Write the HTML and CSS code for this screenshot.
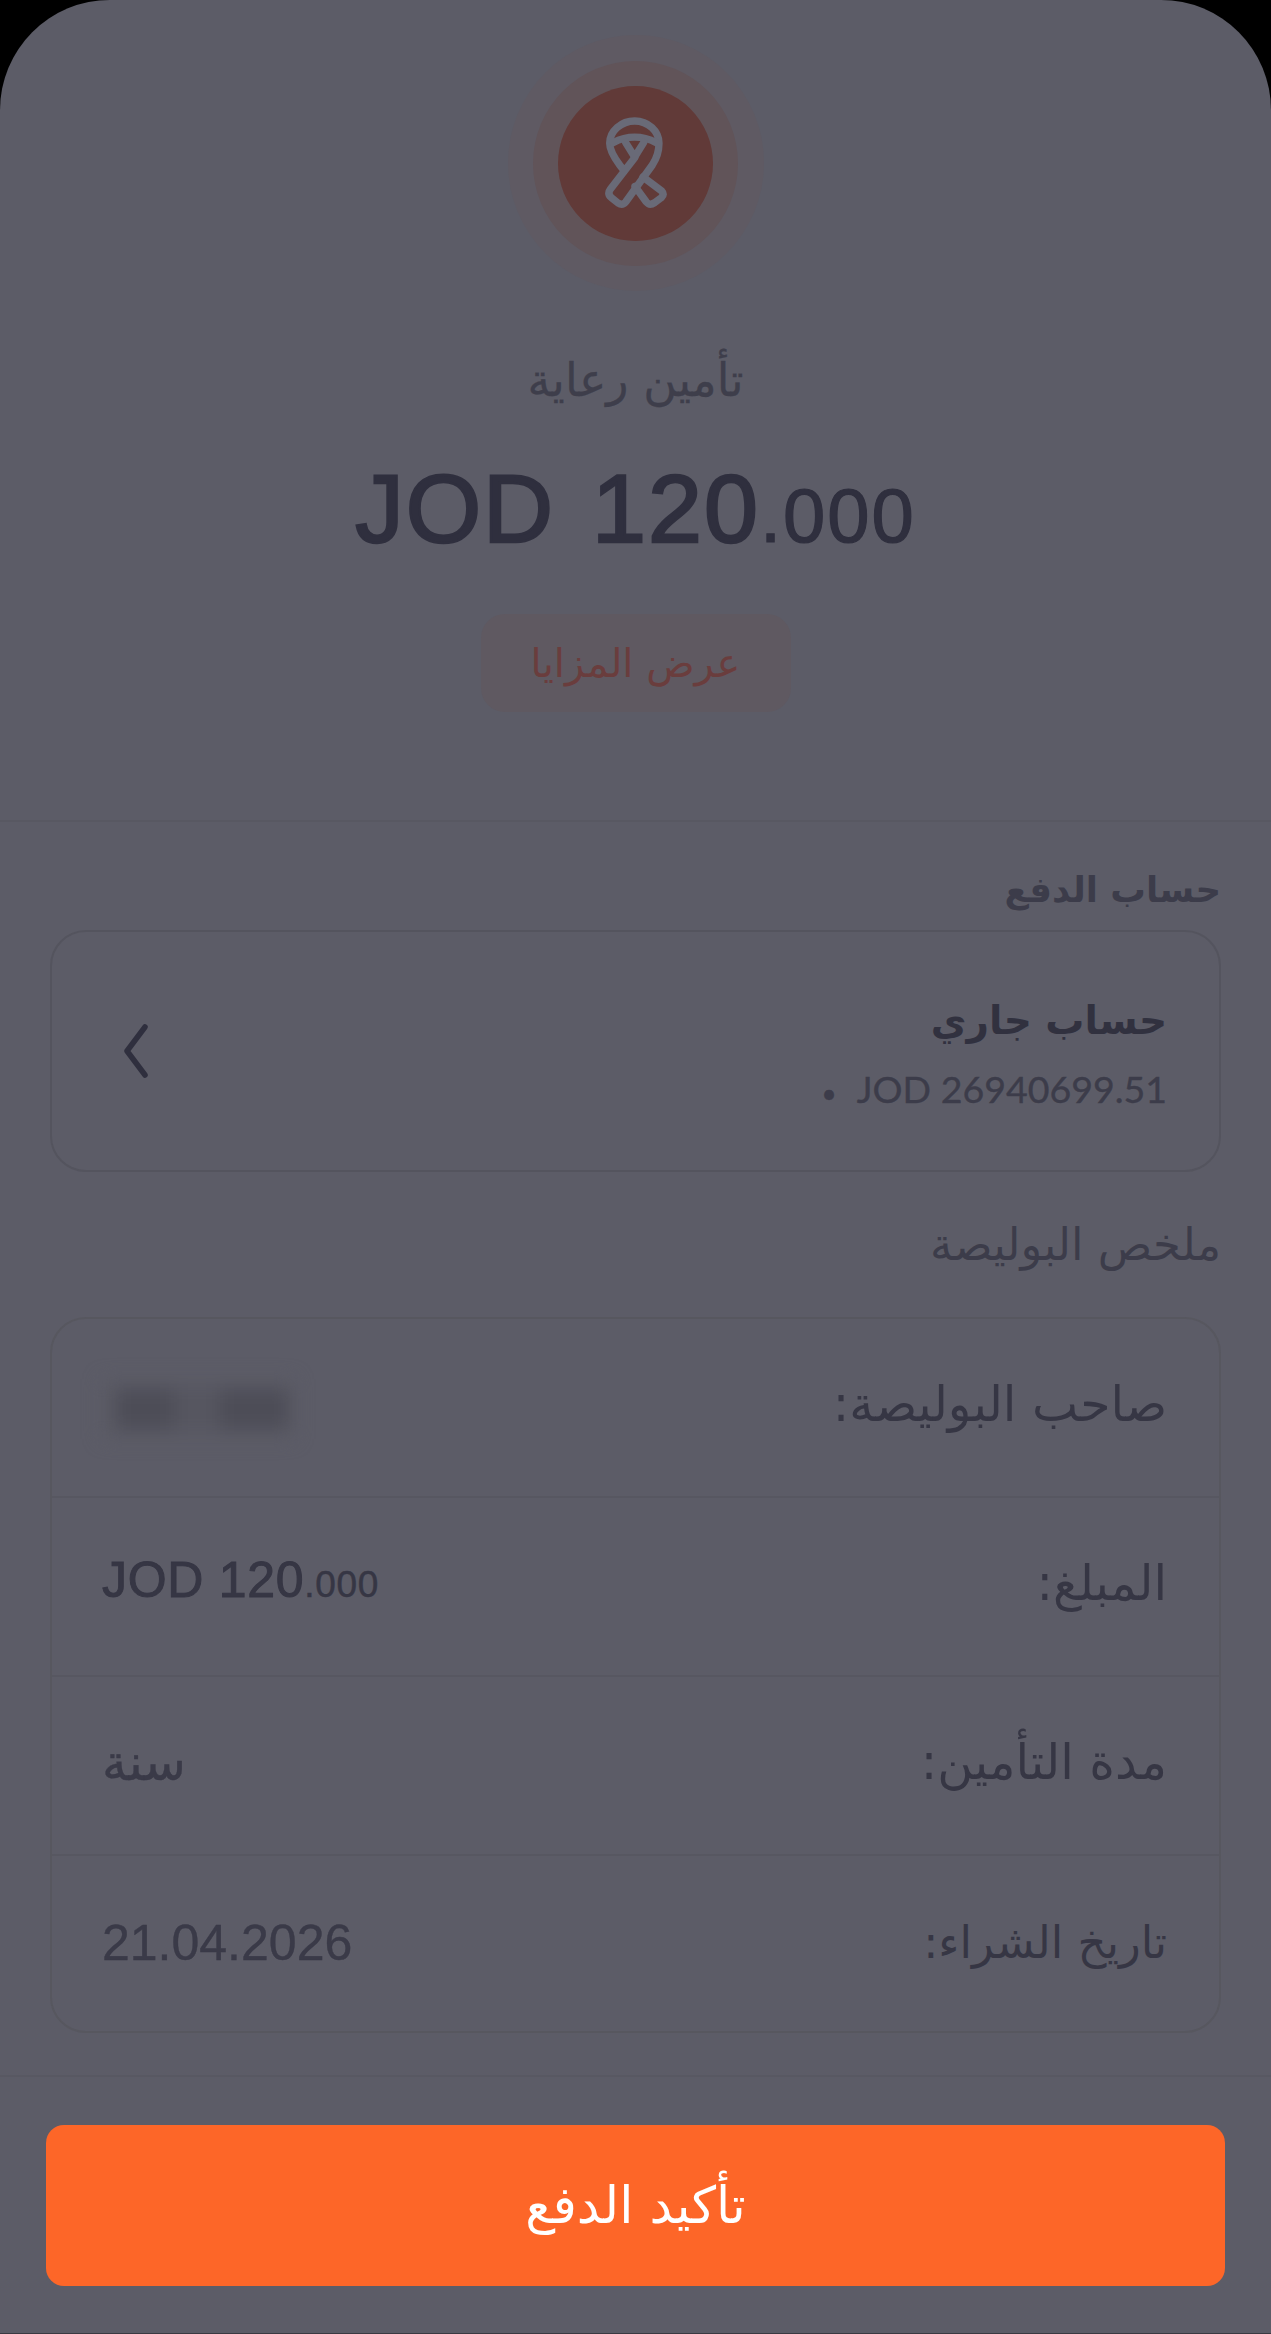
FILE: index.html
```html
<!DOCTYPE html>
<html lang="ar" dir="rtl">
<head>
<meta charset="utf-8">
<title>تأكيد الدفع</title>
<link rel="stylesheet" href="styles.css">
</head>
<body>
<div class="sheet">
    <div class="hero">
        <div class="ring-outer">
            <div class="ring-middle">
                <div class="ring-inner">
                    <svg class="ribbon" viewBox="460 345 195 285" fill="none" stroke="#696a77" stroke-width="22" stroke-linecap="round" stroke-linejoin="round">
                        <path d="M555 470 L482 565 Q472 578 485 590 L505 606 Q518 615 528 603 L608 492 Q628 462 628 427 C628 390 595 360 555 360 C515 360 480 390 480 427 C480 450 495 472 510 492 L524 510"/>
                        <path d="M580 528 L636 570 Q645 580 635 590 L615 605 Q600 615 590 603 L556 556"/>
                        <path d="M490 425 Q555 392 620 425"/>
                        <path d="M528 425 L555 468 L582 425"/>
                    </svg>
                </div>
            </div>
        </div>
        <div class="hero-title">تأمين رعاية</div>
        <div class="hero-amount" dir="ltr">JOD 120<span class="hero-decimals">.000</span></div>
        <div class="benefits-btn">عرض المزايا</div>
    </div>

    <div class="content">
        <div class="section-label section-label-bold">حساب الدفع</div>
        <div class="account-card">
            <div class="account-info">
                <div class="account-name">حساب جاري</div>
                <div class="account-balance" dir="ltr"><span class="balance-dot">•</span>JOD 26940699.51</div>
            </div>
            <svg class="chevron" viewBox="0 0 24 56" fill="none" stroke="#2f2f3e" stroke-width="5.5" stroke-linecap="round" stroke-linejoin="round">
                <path d="M21 4 L3 28 L21 52"/>
            </svg>
        </div>

        <div class="section-label section-label-summary">ملخص البوليصة</div>
        <div class="summary-card">
            <div class="summary-row">
                <span class="summary-key">صاحب البوليصة:</span>
                <div class="blurred-name">
                    <span class="blob blob-right"></span>
                    <span class="blob blob-mid"></span>
                    <span class="blob blob-left"></span>
                </div>
            </div>
            <div class="summary-row">
                <span class="summary-key">المبلغ:</span>
                <span class="summary-amount" dir="ltr">JOD 120<span class="summary-decimals">.000</span></span>
            </div>
            <div class="summary-row">
                <span class="summary-key">مدة التأمين:</span>
                <span class="summary-value">سنة</span>
            </div>
            <div class="summary-row">
                <span class="summary-key summary-key-narrow">تاريخ الشراء:</span>
                <span class="summary-date" dir="ltr">21.04.2026</span>
            </div>
        </div>
    </div>

    <div class="footer">
        <div class="confirm-btn">تأكيد الدفع</div>
    </div>
</div>
</body>
</html>
```

FILE: styles.css
```css
html, body {
    margin: 0;
    padding: 0;
    background: #000;
}

.sheet {
    display: flex;
    flex-direction: column;
    box-sizing: border-box;
    width: 1271px;
    height: 2334px;
    overflow: hidden;
    background: #5c5c67;
    border-bottom: 1px solid #3a3a42;
    border-radius: 110px 110px 0 0;
    font-family: "DejaVu Sans", "Liberation Sans", sans-serif;
    color: #3c3c4a;
}

.hero {
    display: flex;
    flex-direction: column;
    align-items: center;
    height: 785px;
    padding-top: 35px;
    border-bottom: 2px solid #585862;
}

.ring-outer, .ring-middle, .ring-inner {
    display: flex;
    align-items: center;
    justify-content: center;
    border-radius: 50%;
}

.ring-outer {
    width: 256px;
    height: 256px;
    background: #5f5a63;
}

.ring-middle {
    width: 205px;
    height: 205px;
    background: #615459;
}

.ring-inner {
    width: 155px;
    height: 155px;
    background: #613a38;
}

.ribbon {
    width: 65px;
    height: 95px;
}

.hero-title {
    margin-top: 56px;
    height: 66px;
    line-height: 66px;
    font-size: 46px;
    -webkit-text-stroke: 0.3px #3e3e4b;
    color: #3e3e4b;
}

.hero-amount {
    margin-top: 44px;
    height: 104px;
    line-height: 104px;
    font-family: "Liberation Sans", sans-serif;
    font-size: 97px;
    letter-spacing: 2px;
    word-spacing: 8px;
    -webkit-text-stroke: 2.5px #2f2f3e;
    color: #2f2f3e;
}

.hero-decimals {
    font-size: 76px;
    -webkit-text-stroke: 1.2px #2f2f3e;
}

.benefits-btn {
    display: flex;
    align-items: center;
    justify-content: center;
    margin-top: 53px;
    width: 310px;
    height: 98px;
    border-radius: 24px;
    background: #5f5961;
    font-size: 40px;
    color: #6a3d3d;
}

.content {
    flex: 1;
    padding: 0 50px;
}

.section-label {
    height: 56px;
    line-height: 56px;
    color: #3c3c4a;
}

.section-label-bold {
    margin-top: 40px;
    margin-bottom: 12px;
    font-size: 35.5px;
    font-weight: bold;
}

.section-label-summary {
    margin-top: 45px;
    margin-bottom: 44px;
    font-size: 45px;
}

.account-card {
    display: flex;
    align-items: center;
    justify-content: space-between;
    box-sizing: border-box;
    height: 242px;
    padding: 0 52px 0 72px;
    border: 2px solid #54545e;
    border-radius: 36px;
}

.account-name {
    height: 60px;
    line-height: 60px;
    font-size: 39px;
    font-weight: bold;
    color: #31313f;
}

.account-balance {
    margin-top: 15px;
    font-family: Lato, "Liberation Sans", sans-serif;
    font-size: 37.5px;
    -webkit-text-stroke: 0.4px #3c3c4a;
    color: #3c3c4a;
    text-align: right;
}

.balance-dot {
    margin-right: 20px;
    font-size: 26px;
}

.chevron {
    width: 24px;
    height: 56px;
}

.summary-card {
    box-sizing: border-box;
    height: 716px;
    border: 2px solid #57575f;
    border-radius: 36px;
}

.summary-row {
    display: flex;
    align-items: center;
    justify-content: space-between;
    box-sizing: border-box;
    height: 179px;
    padding: 0 52px 6px 50px;
    border-bottom: 2px solid #575761;
}

.summary-row:last-child {
    border-bottom: none;
}

.summary-key {
    font-size: 49px;
    color: #363644;
}

.summary-key-narrow {
    font-size: 45px;
}

.summary-value {
    font-size: 50px;
    -webkit-text-stroke: 0.4px #3a3a48;
    color: #3a3a48;
}

.summary-date {
    font-family: "Liberation Sans", sans-serif;
    font-size: 50px;
    -webkit-text-stroke: 0.4px #3a3a48;
    color: #3a3a48;
}

.summary-amount {
    margin-bottom: 8px;
    font-family: "Liberation Sans", sans-serif;
    font-size: 50px;
    letter-spacing: 0.7px;
    -webkit-text-stroke: 1px #363644;
    color: #363644;
}

.summary-decimals {
    font-size: 37px;
    -webkit-text-stroke: 0.5px #363644;
}

.blurred-name {
    display: flex;
    align-items: center;
    box-sizing: border-box;
    width: 192px;
    height: 60px;
    margin-top: 8px;
    padding: 0 6px 0 14px;
    background: #5a5a64;
    filter: blur(9px);
}

.blob {
    display: block;
    height: 40px;
    background: #4d4d57;
}

.blob-left {
    width: 58px;
}

.blob-mid {
    width: 46px;
    background: #565660;
}

.blob-right {
    width: 68px;
}

.footer {
    height: 258px;
    box-sizing: border-box;
    padding: 48px 46px 0;
    border-top: 2px solid #585862;
}

.confirm-btn {
    display: flex;
    align-items: center;
    justify-content: center;
    height: 161px;
    border-radius: 18px;
    background: #fd6628;
    font-size: 51px;
    color: #fff;
}
```
